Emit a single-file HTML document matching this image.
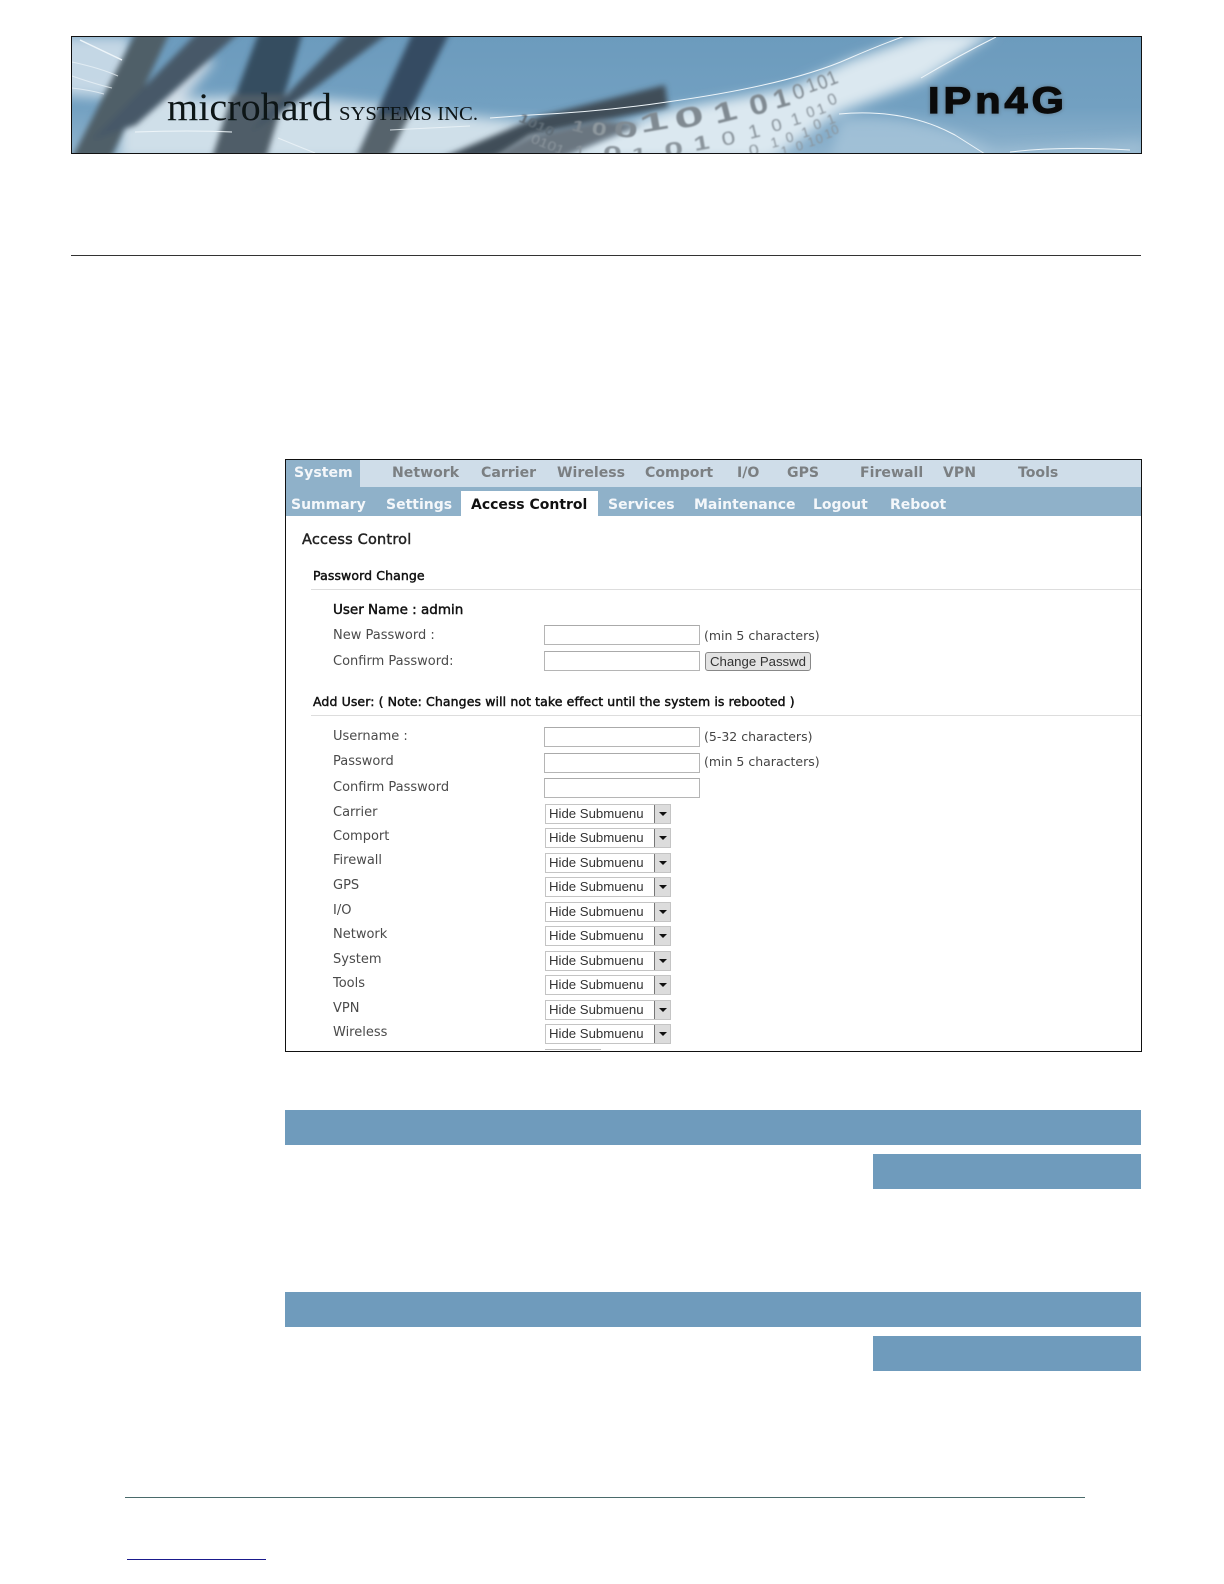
<!DOCTYPE html>
<html><head><meta charset="utf-8"><title>Access Control</title>
<style>
html,body{margin:0;padding:0;background:#fff}
#p{position:relative;width:1224px;height:1584px;overflow:hidden;background:#fff;font-family:"DejaVu Sans",sans-serif}
#p div{position:absolute}
.t{white-space:nowrap;line-height:16px;height:16px}
.n{font-weight:bold;font-size:14.1px;color:#7b7f82;top:465px}
.s{font-weight:bold;font-size:14px;color:#f4f7fa;top:497px}
.l{font-size:13px;color:#4a4a4a;left:333px}
.h{font-size:12.5px;letter-spacing:.1px;-webkit-text-stroke:.45px #111;color:#111;left:313px}
.i{left:544px;width:154px;height:18px;border:1px solid #b5b5b5;border-top-color:#aaa;background:#fff}
.c{font-size:12.5px;color:#444;left:704px}
.sel{left:545px;width:124px;height:18px;border:1px solid #c4c4c4;background:#fff;font:13.2px/18px "Liberation Sans",sans-serif;color:#333;text-indent:3px}
.sel i{position:absolute;right:0;top:0;width:15px;height:18px;background:#dcdcdc;border-left:1px solid #777;display:block}
.sel i:after{content:"";position:absolute;left:4px;top:7px;border:4px solid transparent;border-top:4px solid #111;border-bottom:0}
.b{background:#6f9bbc}
</style></head><body><div id="p">
<svg style="position:absolute;left:71px;top:36px" width="1071" height="118" viewBox="71 36 1071 118">
<defs>
<linearGradient id="g" x1="0" y1="0" x2="0" y2="1"><stop offset="0" stop-color="#6c9bbd"/><stop offset=".6" stop-color="#72a0c1"/><stop offset="1" stop-color="#8fb3cd"/></linearGradient>
<filter id="b6" x="-30%" y="-50%" width="160%" height="200%"><feGaussianBlur stdDeviation="6"/></filter>
<filter id="b3" x="-30%" y="-30%" width="160%" height="160%"><feGaussianBlur stdDeviation="3"/></filter>
<filter id="b2" x="-20%" y="-20%" width="140%" height="140%"><feGaussianBlur stdDeviation="1.5"/></filter>
<filter id="b1" x="-10%" y="-10%" width="120%" height="120%"><feGaussianBlur stdDeviation=".7"/></filter>
<filter id="b0" x="-10%" y="-10%" width="120%" height="120%"><feGaussianBlur stdDeviation=".35"/></filter>
</defs>
<rect x="71" y="36" width="1071" height="118" fill="url(#g)"/>
<g filter="url(#b6)">
<path d="M120 105 Q250 88 380 105 T560 125 L500 160 L120 160Z" fill="#cfdfe9"/>
<path d="M60 36 L130 36 L135 100 L60 95Z" fill="#d3e2ec" opacity=".85"/>
<path d="M150 100 L200 55 L215 60 L180 105Z" fill="#e3e9ed" opacity=".8"/>
<path d="M540 160 L667 110 L790 88 L850 60 L930 32 L995 32 L925 80 L840 112 L770 160Z" fill="#dbe8f0"/>
<path d="M840 118 Q930 110 1010 160 L830 160Z" fill="#a6c4d9" opacity=".8"/>
<path d="M1000 150 L1145 140 L1145 160 L1000 160Z" fill="#a6c4d9" opacity=".6"/>
</g>
<g filter="url(#b3)">
<path d="M72 158 L111 158 L170 32 L136 32Z" fill="#4f5e68"/>
<path d="M92 140 L136 125 L240 32 L198 32Z" fill="#465868"/>
<path d="M212 158 L266 158 L303 32 L259 32Z" fill="#364d61"/>
<path d="M212 158 L266 158 L285 95 L232 95Z" fill="#505d67"/>
<path d="M250 132 L292 105 L390 32 L348 32Z" fill="#3f5264"/>
<path d="M356 158 L388 158 L450 32 L413 32Z" fill="#344c62"/>
<path d="M356 158 L388 158 L410 115 L378 115Z" fill="#57636c"/>
<path d="M441 158 L540 116 L665 85 L668 107 L530 136 L497 158Z" fill="#3f4d58"/>
</g>
<path d="M490 158 L530 136 L600 120 L640 125 L560 158Z" fill="#6a7680" filter="url(#b3)"/>
<g stroke="#eef5f9" fill="none" filter="url(#b0)">
<path d="M80 40 Q105 52 122 60" stroke-width="1.5"/>
<path d="M72 62 Q100 68 118 76M72 76 Q95 84 112 88M72 88 Q90 90 104 94" stroke-width="1" opacity=".7"/>
<path d="M135 132 Q190 130 232 132" stroke-width="1"/>
<path d="M278 138 Q295 145 315 153M390 130 L470 126" stroke-width="1" opacity=".8"/>
<path d="M490 118 L530 115 Q600 112 667 102 Q790 85 850 58 Q880 45 905 36" stroke-width="1"/>
<path d="M921 78 Q960 55 996 37M839 114 Q905 108 955 135 L985 154M1010 152 Q1060 146 1130 150" stroke-width="1"/>
</g>
<g font-family="Liberation Sans,sans-serif" font-weight="bold" fill="#808a92" filter="url(#b1)">
<text transform="translate(518 121) rotate(25) scale(1.3 1)" font-size="13" fill="#5f6c76">1010</text>
<text transform="translate(571 130) rotate(15) scale(1.4 1)" font-size="16">1</text>
<text transform="translate(591 134) rotate(8) scale(1.5 1)" font-size="18" fill="#8f999f">0</text>
<text transform="translate(613 136) rotate(5) scale(2 1)" font-size="22">0</text>
<text transform="translate(641 133) rotate(-10) scale(2 1)" font-size="26">1</text>
<text transform="translate(677 130) rotate(-14) scale(1.9 1)" font-size="28">0</text>
<text transform="translate(716 124) rotate(-14) scale(1.5 1)" font-size="28">1</text>
<text transform="translate(752 116) rotate(-15) scale(1.2 1)" font-size="28">0</text>
<text transform="translate(776 109) rotate(-16) scale(1.1 1)" font-size="26">1</text>
<text transform="translate(795 100) rotate(-18)" font-size="21" font-weight="normal">0</text>
<text transform="translate(809 93) rotate(-20) scale(.9 1)" font-size="20" font-weight="normal">1</text>
<text transform="translate(820 90) rotate(-20) scale(.9 1)" font-size="20" font-weight="normal">0</text>
<text transform="translate(830 86) rotate(-22) scale(.9 1)" font-size="20" font-weight="normal">1</text>
<g font-weight="normal" fill="#8a949c">
<text transform="translate(530 142) rotate(22) scale(1.2 1)" font-size="13">0101</text>
<text transform="translate(574 155) rotate(5) scale(1.4 1)" font-size="14">1</text>
<text transform="translate(603 160) scale(1.7 1)" font-size="20" font-weight="bold">0</text>
<text transform="translate(632 160) scale(1.4 1)" font-size="18" font-weight="bold">1</text>
<text transform="translate(665 157) rotate(-6) scale(1.7 1)" font-size="20" font-weight="bold">0</text>
<text transform="translate(695 151) rotate(-10) scale(1.4 1)" font-size="20" font-weight="bold">1</text>
<text transform="translate(723 146) rotate(-12) scale(1.3 1)" font-size="19">0</text>
<text transform="translate(750 139) rotate(-14) scale(1.1 1)" font-size="19">1</text>
<text transform="translate(773 132) rotate(-15) scale(1.1 1)" font-size="17">0</text>
<text transform="translate(793 126) rotate(-17)" font-size="17">1</text>
<text transform="translate(808 118) rotate(-18)" font-size="15">0</text>
<text transform="translate(819 115) rotate(-20)" font-size="15">1</text>
<text transform="translate(830 106) rotate(-22)" font-size="16">0</text>
<text transform="translate(750 156) rotate(-12) scale(1.2 1)" font-size="15">0</text>
<text transform="translate(772 148) rotate(-14)" font-size="14">1</text>
<text transform="translate(787 143) rotate(-15)" font-size="14">0</text>
<text transform="translate(803 138) rotate(-16)" font-size="14">1</text>
<text transform="translate(815 130) rotate(-18)" font-size="14">0</text>
<text transform="translate(829 125) rotate(-20)" font-size="14">1</text>
<text transform="translate(782 156) rotate(-12)" font-size="13">1</text>
<text transform="translate(797 151) rotate(-14)" font-size="13">0</text>
<text transform="translate(809 147) rotate(-15)" font-size="13">1</text>
<text transform="translate(817 144) rotate(-16)" font-size="13">0</text>
<text transform="translate(826 139) rotate(-18)" font-size="13">1</text>
<text transform="translate(833 135) rotate(-20)" font-size="13">0</text>
</g>
</g>
<text x="167" y="120" textLength="165" lengthAdjust="spacingAndGlyphs" font-family="Liberation Serif,serif" font-size="39" fill="#0c1218" filter="url(#b0)">microhard</text>
<text x="339" y="120" textLength="139" lengthAdjust="spacingAndGlyphs" font-family="Liberation Serif,serif" font-size="20" fill="#0c1218" filter="url(#b0)">SYSTEMS INC.</text>
<text transform="translate(928 113) scale(1.12 1)" font-family="Liberation Sans,sans-serif" font-weight="bold" font-size="37" letter-spacing="3.6" fill="#5d7180" stroke="#5d7180" stroke-width="3" opacity=".55" filter="url(#b2)">IPn4G</text>
<text transform="translate(928 113) scale(1.12 1)" font-family="Liberation Sans,sans-serif" font-weight="bold" font-size="37" letter-spacing="3.6" fill="#0a0a0a" stroke="#0a0a0a" stroke-width="1.2">IPn4G</text>
<rect x="71.5" y="36.5" width="1070" height="117" fill="none" stroke="#111"/>
</svg>
<div style="left:71px;top:255px;width:1070px;height:1px;background:#333"></div>

<div style="left:285px;top:459px;width:855px;height:591px;border:1px solid #111;overflow:hidden;background:#fff"></div>
<div style="left:286px;top:460px;width:855px;height:27px;background:#cfdde9"></div>
<div style="left:286px;top:460px;width:74px;height:27px;background:#8fb1c9"></div>
<div style="left:286px;top:487px;width:855px;height:29px;background:#8fb1c9"></div>
<div style="left:461px;top:491px;width:137px;height:25px;background:#fff"></div>

<div class="t n" style="left:294px;color:#f4f7fa">System</div>
<div class="t n" style="left:392px">Network</div>
<div class="t n" style="left:481px">Carrier</div>
<div class="t n" style="left:557px">Wireless</div>
<div class="t n" style="left:645px">Comport</div>
<div class="t n" style="left:737px">I/O</div>
<div class="t n" style="left:787px">GPS</div>
<div class="t n" style="left:860px">Firewall</div>
<div class="t n" style="left:943px">VPN</div>
<div class="t n" style="left:1018px">Tools</div>

<div class="t s" style="left:291px">Summary</div>
<div class="t s" style="left:386px">Settings</div>
<div class="t s" style="left:471px;color:#111">Access Control</div>
<div class="t s" style="left:608px">Services</div>
<div class="t s" style="left:694px">Maintenance</div>
<div class="t s" style="left:813px">Logout</div>
<div class="t s" style="left:890px">Reboot</div>

<div class="t" style="left:302px;top:532px;font-size:14.5px;letter-spacing:.2px;-webkit-text-stroke:.45px #222;color:#222">Access Control</div>
<div class="t h" style="top:568px">Password Change</div>
<div style="left:311px;top:589px;width:830px;height:1px;background:#ddd"></div>
<div class="t" style="left:333px;top:602px;font-size:13.5px;-webkit-text-stroke:.45px #111;color:#111">User Name : admin</div>
<div class="t l" style="top:628px">New Password :</div>
<div class="t l" style="top:654px">Confirm Password:</div>
<div class="i" style="top:625px"></div>
<div class="i" style="top:651px"></div>
<div class="t c" style="top:628px">(min 5 characters)</div>
<div style="left:705px;top:652px;width:104px;height:17px;border:1px solid #888;border-radius:3px;background:#e3e3e3;font:13.2px/17px 'Liberation Sans',sans-serif;color:#333;text-align:center">Change Passwd</div>

<div class="t h" style="top:694px">Add User: ( Note: Changes will not take effect until the system is rebooted )</div>
<div style="left:311px;top:715px;width:830px;height:1px;background:#ddd"></div>

<div class="t l" style="top:729px">Username :</div>
<div class="t l" style="top:754px">Password</div>
<div class="t l" style="top:780px">Confirm Password</div>
<div class="i" style="top:727px"></div>
<div class="i" style="top:753px"></div>
<div class="i" style="top:778px"></div>
<div class="t c" style="top:729px">(5-32 characters)</div>
<div class="t c" style="top:754px">(min 5 characters)</div>

<div class="t l" style="top:805px">Carrier</div>
<div class="t l" style="top:829px">Comport</div>
<div class="t l" style="top:853px">Firewall</div>
<div class="t l" style="top:878px">GPS</div>
<div class="t l" style="top:903px">I/O</div>
<div class="t l" style="top:927px">Network</div>
<div class="t l" style="top:952px">System</div>
<div class="t l" style="top:976px">Tools</div>
<div class="t l" style="top:1001px">VPN</div>
<div class="t l" style="top:1025px">Wireless</div>

<div class="sel" style="top:804px">Hide Submuenu<i></i></div>
<div class="sel" style="top:828px">Hide Submuenu<i></i></div>
<div class="sel" style="top:853px">Hide Submuenu<i></i></div>
<div class="sel" style="top:877px">Hide Submuenu<i></i></div>
<div class="sel" style="top:902px">Hide Submuenu<i></i></div>
<div class="sel" style="top:926px">Hide Submuenu<i></i></div>
<div class="sel" style="top:951px">Hide Submuenu<i></i></div>
<div class="sel" style="top:975px">Hide Submuenu<i></i></div>
<div class="sel" style="top:1000px">Hide Submuenu<i></i></div>
<div class="sel" style="top:1024px">Hide Submuenu<i></i></div>
<div style="left:545px;top:1049px;width:56px;height:1px;background:#bbb"></div>

<div class="b" style="left:285px;top:1110px;width:856px;height:35px"></div>
<div class="b" style="left:873px;top:1154px;width:268px;height:35px"></div>
<div class="b" style="left:285px;top:1292px;width:856px;height:35px"></div>
<div class="b" style="left:873px;top:1336px;width:268px;height:35px"></div>

<div style="left:125px;top:1497px;width:960px;height:1px;background:#4a6a6a"></div>
<div style="left:127px;top:1559px;width:139px;height:1px;background:#1a1a8c"></div>
</div></body></html>
